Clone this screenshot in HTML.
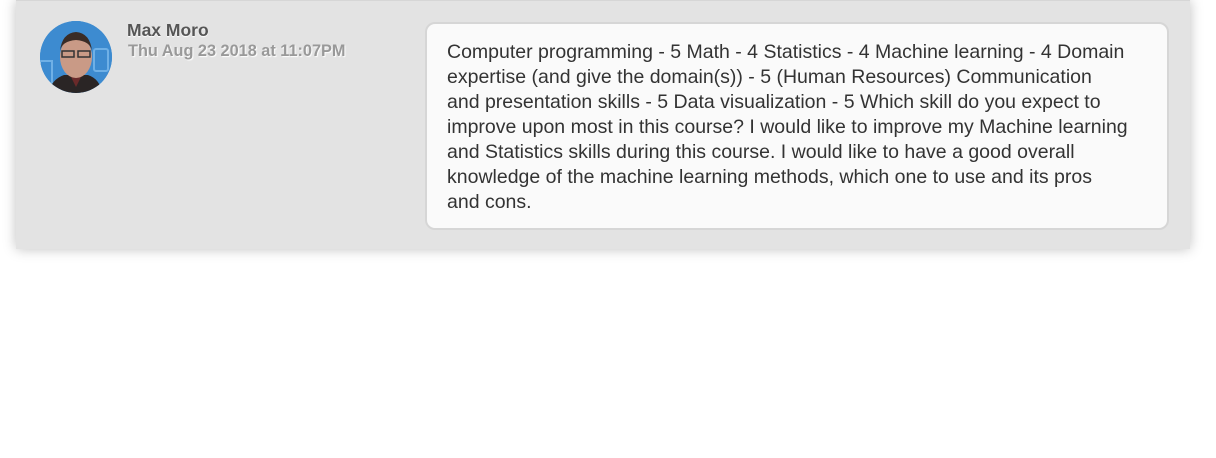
<!DOCTYPE html>
<html><head><style>
body{margin:0;width:1216px;height:458px;background:#fff;font-family:"Liberation Sans",Arial,sans-serif;position:relative;overflow:hidden}
.panel{position:absolute;left:16px;top:0;width:1174px;height:248px;background:#e3e3e3;box-shadow:0 0 12px rgba(0,0,0,.25);border-top:1px solid #d6d6d6}
.av{position:absolute;left:40px;top:21px;width:72px;height:72px;border-radius:50%;overflow:hidden;background:#3d8bd0}
.name{position:absolute;left:127px;top:20px;font-size:17.5px;font-weight:bold;color:#555;text-shadow:0 1px 1px #fff}
.date{position:absolute;left:128px;top:42px;font-size:16.3px;font-weight:bold;color:#999;text-shadow:1px 1px 1px #fff}
.bub{position:absolute;left:425px;top:22px;width:684px;height:188px;padding:16px 36px 0 20px;background:#fafafa;border:2px solid #d6d6d6;border-radius:10px;font-size:19.5px;line-height:25px;color:#333;white-space:nowrap}
</style></head><body>
<div class="panel"></div>
<div class="av"><svg width="72" height="72" viewBox="0 0 72 72">
<rect width="72" height="72" fill="#3d8bd0"/>
<rect x="54" y="28" width="14" height="22" rx="2" fill="none" stroke="#6fb0e6" stroke-width="2"/>
<path d="M0 40h12v22H0z" fill="none" stroke="#6fb0e6" stroke-width="2"/>
<path d="M8 72 Q12 58 24 54 L48 54 Q60 58 62 72Z" fill="#2a2525"/>
<path d="M30 54 L36 66 L42 54Z" fill="#6a2a2a"/>
<ellipse cx="36" cy="36" rx="16" ry="21" fill="#c99a86"/>
<path d="M20 30 Q22 12 36 11 Q50 12 52 30 Q50 20 36 19 Q22 20 20 30Z" fill="#3a2c26"/>
<rect x="22" y="30" width="12" height="6" fill="none" stroke="#333" stroke-width="1.5"/>
<rect x="38" y="30" width="12" height="6" fill="none" stroke="#333" stroke-width="1.5"/>
</svg></div>
<div class="name">Max Moro</div>
<div class="date">Thu Aug 23 2018 at 11:07PM</div>
<div class="bub">Computer programming - 5 Math - 4 Statistics - 4 Machine learning - 4 Domain<br>expertise (and give the domain(s)) - 5 (Human Resources) Communication<br>and presentation skills - 5 Data visualization - 5 Which skill do you expect to<br>improve upon most in this course? I would like to improve my Machine learning<br>and Statistics skills during this course. I would like to have a good overall<br>knowledge of the machine learning methods, which one to use and its pros<br>and cons.</div>
</body></html>
